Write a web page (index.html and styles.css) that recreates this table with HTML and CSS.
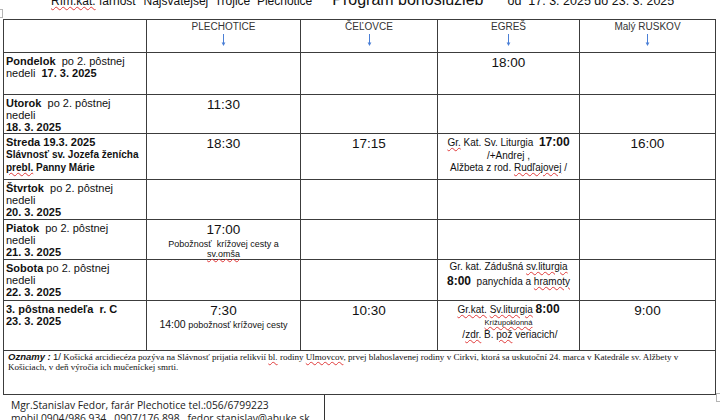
FILE: index.html
```html
<!DOCTYPE html>
<html lang="sk">
<head>
<meta charset="utf-8">
<title>Program bohoslužieb</title>
<link rel="stylesheet" href="styles.css">
</head>
<body>
<div class="page">
  <div class="title">
    <div class="title-row">
      <span class="t-parish"><span class="sp">Rím.kat.</span> farnosť  Najsvätejšej  Trojice  Plechotice</span>
      <span class="t-main">Program bohoslužieb</span>
      <span class="t-date">od  17. 3. 2025 do 23. 3. 2025</span>
    </div>
  </div>

  <table class="sched">
    <colgroup>
      <col class="w1"><col class="w2"><col class="w3"><col class="w4"><col class="w5">
    </colgroup>
    <tr class="r-head">
      <td></td>
      <td class="head">PLECHOTICE<svg class="arrow" viewBox="0 0 5 12" width="5" height="12"><line x1="2.5" y1="0" x2="2.5" y2="9" /><polygon points="0.6,8.5 4.4,8.5 2.5,12" /></svg></td>
      <td class="head">ČEĽOVCE<svg class="arrow" viewBox="0 0 5 12" width="5" height="12"><line x1="2.5" y1="0" x2="2.5" y2="9" /><polygon points="0.6,8.5 4.4,8.5 2.5,12" /></svg></td>
      <td class="head">EGREŠ<svg class="arrow" viewBox="0 0 5 12" width="5" height="12"><line x1="2.5" y1="0" x2="2.5" y2="9" /><polygon points="0.6,8.5 4.4,8.5 2.5,12" /></svg></td>
      <td class="head">Malý RUSKOV<svg class="arrow" viewBox="0 0 5 12" width="5" height="12"><line x1="2.5" y1="0" x2="2.5" y2="9" /><polygon points="0.6,8.5 4.4,8.5 2.5,12" /></svg></td>
    </tr>
    <tr class="r-pon">
      <td class="day"><b>Pondelok</b>  po 2. pôstnej<br>nedeli  <b>17. 3. 2025</b></td>
      <td></td>
      <td></td>
      <td class="mid"><span class="time">18:00</span></td>
      <td></td>
    </tr>
    <tr class="r-uto">
      <td class="day"><b>Utorok</b>  po 2. pôstnej<br>nedeli<br><b>18. 3. 2025</b></td>
      <td class="mid"><span class="time">11:30</span></td>
      <td></td>
      <td></td>
      <td></td>
    </tr>
    <tr class="r-str">
      <td class="day"><b>Streda 19.3. 2025</b><br><b class="feast">Slávnosť sv. Jozefa ženícha<br><span class="sp">prebl.</span> Panny Márie</b></td>
      <td class="mid"><span class="time">18:30</span></td>
      <td class="mid"><span class="time">17:15</span></td>
      <td class="mid note"><span class="sp">Gr.</span> Kat. Sv. Liturgia  <b class="tb">17:00</b><br>/+Andrej ,<br>Alžbeta z rod. <span class="sp">Rudľajovej</span> /</td>
      <td class="mid"><span class="time">16:00</span></td>
    </tr>
    <tr class="r-stv">
      <td class="day"><b>Štvrtok</b>  po 2. pôstnej<br>nedeli<br><b>20. 3. 2025</b></td>
      <td></td>
      <td></td>
      <td></td>
      <td></td>
    </tr>
    <tr class="r-pia">
      <td class="day"><b>Piatok</b>  po 2. pôstnej<br>nedeli<br><b>21. 3. 2025</b></td>
      <td class="mid"><span class="time">17:00</span><span class="small">Pobožnosť  krížovej cesty a<br><span class="sp">sv.omša</span></span></td>
      <td></td>
      <td></td>
      <td></td>
    </tr>
    <tr class="r-sob">
      <td class="day"><b>Sobota</b> po 2. pôstnej<br>nedeli<br><b>22. 3. 2025</b></td>
      <td></td>
      <td></td>
      <td class="mid note2">Gr. kat. Zádušná <span class="sp">sv.liturgia</span><br><b class="tb">8:00</b>  panychída a <span class="sp">hramoty</span></td>
      <td></td>
    </tr>
    <tr class="r-ned">
      <td class="day"><b>3. pôstna nedeľa  r. C<br>23. 3. 2025</b></td>
      <td class="mid"><span class="time">7:30</span><span class="sub"><span class="sub-t">14:00</span> pobožnosť krížovej cesty</span></td>
      <td class="mid"><span class="time">10:30</span></td>
      <td class="mid note3"><span class="sp">Gr.kat.</span> <span class="sp">Sv.liturgia</span> <b class="tb">8:00</b><br><span class="tiny sp">Krížupoklonná</span><br> /<span class="sp">zdr.</span> B. <span class="sp">pož</span> veriacich/</td>
      <td class="mid"><span class="time">9:00</span></td>
    </tr>
    <tr class="r-ozn">
      <td class="ozn" colspan="5"><b class="ozn-label">Oznamy :</b> <span class="ozn-num">1/</span> Košická arcidiecéza pozýva na Slávnosť prijatia relikvií <span class="sp">bl.</span> rodiny <span class="sp">Ulmovcov</span>, prvej blahoslavenej rodiny v Cirkvi, ktorá sa uskutoční 24. marca v Katedrále sv. Alžbety v Košiciach, v deň výročia ich mučeníckej smrti.</td>
    </tr>
  </table>

  <div class="footer">
    <div>Mgr.Stanislav Fedor, farár Plechotice tel.:056/6799223</div>
    <div>mobil.0904/986 934 , 0907/176 898 , fedor.stanislav@abuke.sk</div>
  </div>

  <span class="handle handle-tl"></span>
  <span class="handle handle-br"></span>
</div>
</body>
</html>
```
FILE: styles.css
```css
html, body {
  margin: 0;
  padding: 0;
  background: #fff;
}

body {
  font-family: "Liberation Sans", Arial, sans-serif;
  color: #111;
}

.page {
  position: relative;
  width: 720px;
  height: 420px;
  overflow: hidden;
}

.title {
  height: 19px;
  overflow: hidden;
}

.title-row {
  display: flex;
  align-items: baseline;
  padding-left: 51px;
  margin-top: -8px;
  line-height: 16px;
  white-space: pre;
}

.t-parish {
  font-size: 12px;
}

.t-main {
  font-size: 16px;
  margin-left: 20px;
}

.t-date {
  font-size: 12.5px;
  margin-left: 24px;
}

.sched {
  margin-left: 3px;
  border-collapse: collapse;
  table-layout: fixed;
  width: 713px;
}

.w1 { width: 143px; }
.w2 { width: 154px; }
.w3 { width: 137px; }
.w4 { width: 142px; }
.w5 { width: 136px; }

.sched td {
  border: 1px solid #3c3c3c;
  padding: 1px 2px 0;
  vertical-align: top;
}

.r-head { height: 33px; }
.r-pon { height: 42px; }
.r-uto { height: 38px; }
.r-str { height: 46px; }
.r-stv { height: 40px; }
.r-pia { height: 39px; }
.r-sob { height: 41px; }
.r-ned { height: 50px; }
.r-ozn { height: 44px; }

.head {
  text-align: center;
  font-size: 10px;
  line-height: 12px;
  color: #333;
}

.arrow {
  display: block;
  margin: 1px auto 0;
  overflow: visible;
}

.arrow line {
  stroke: #4a7fd6;
  stroke-width: 1;
}

.arrow polygon {
  fill: #4a7fd6;
}

.day {
  font-size: 11px;
  line-height: 12.3px;
  white-space: pre-wrap;
}

.sched td.day {
  padding-top: 1.5px;
}

.feast {
  font-size: 10px;
  line-height: 11.7px;
}

.mid {
  text-align: center;
}

.time {
  display: block;
  font-size: 13.5px;
  line-height: 15px;
  padding-top: 1px;
}

.small {
  display: block;
  font-size: 9px;
  line-height: 10px;
  margin-top: 2px;
  white-space: pre-wrap;
}

.sub {
  display: block;
  font-size: 9px;
  line-height: 13px;
}

.sub-t {
  font-size: 10.5px;
}

.note, .note2, .note3 {
  font-size: 10px;
  line-height: 12.5px;
  white-space: pre-wrap;
}

.sched td.note {
  padding-top: 2px;
}

.note2 {
  line-height: 14px;
}

.sched td.note2 {
  padding-top: 0;
}

.note3 {
  line-height: 12px;
}

.sched td.note3 {
  padding-top: 2px;
}

.tb {
  font-size: 12px;
}

.tiny {
  font-size: 7.5px;
}

.sp {
  text-decoration: underline wavy #e03a3a;
  text-decoration-thickness: 1px;
  text-underline-offset: 1px;
}

.ozn {
  font-family: "Liberation Serif", "Times New Roman", serif;
  font-size: 9.05px;
  line-height: 10px;
}

.sched td.ozn {
  padding: 1px 4px 0 4px;
}

.ozn-label {
  font-family: "Liberation Sans", Arial, sans-serif;
  font-style: italic;
  font-size: 9.5px;
}

.ozn-num {
  font-family: "Liberation Sans", Arial, sans-serif;
  font-size: 9.5px;
}

.footer {
  width: 325px;
  height: 40px;
  box-sizing: border-box;
  border-right: 1px solid #333;
  padding: 4px 0 0 11px;
  font-family: "Open Sans", "Noto Sans", sans-serif;
  font-size: 10.3px;
  line-height: 13px;
  color: #222;
  white-space: nowrap;
}

.handle {
  position: absolute;
  width: 6px;
  height: 7px;
  border: 1px solid #b5b5b5;
  background: #fff;
}

.handle-tl {
  left: -5px;
  top: 9px;
}

.handle-br {
  left: 716px;
  top: 393px;
}
```
